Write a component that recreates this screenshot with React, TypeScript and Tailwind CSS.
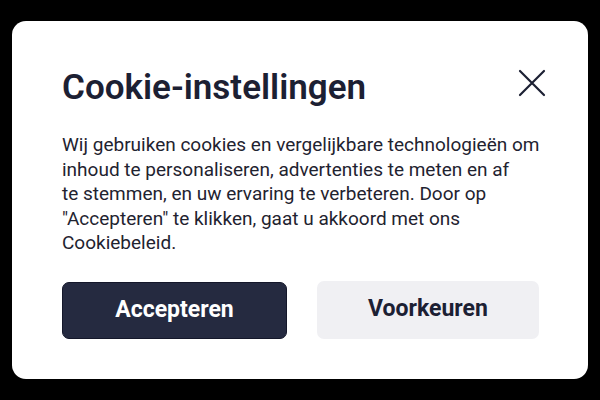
export default function App() {
    return (
        <div className="w-[600px] h-[400px] bg-black pt-[21px] px-[12px]" style={{ fontFamily: "Roboto, 'Liberation Sans', sans-serif" }}>
            <div className="h-[358px] bg-white rounded-[14px] pl-[50px] pr-[42px] pt-[47px]">
                <div className="flex items-start justify-between">
                    <h1 className="text-[35px] leading-[40px] font-semibold text-[#1c2033]">Cookie-instellingen</h1>
                    <button className="mt-[1px] text-[#1c2033]">
                        <svg width="28" height="28" viewBox="0 0 28 28" fill="none" stroke="currentColor" strokeWidth="2.2" strokeLinecap="round">
                            <path d="M2 2 L26 26 M26 2 L2 26" />
                        </svg>
                    </button>
                </div>

                <p className="mt-[25px] text-[19px] leading-[24.5px] text-[#1f2330] whitespace-nowrap">
                    Wij gebruiken cookies en vergelijkbare technologieën om<br />
                    inhoud te personaliseren, advertenties te meten en af<br />
                    te stemmen, en uw ervaring te verbeteren. Door op<br />
                    "Accepteren" te klikken, gaat u akkoord met ons<br />
                    Cookiebeleid.
                </p>

                <div className="flex items-start gap-[30px] mt-[25px]">
                    <button className="w-[225px] h-[57px] mt-[1px] rounded-[7px] bg-[#252a40] border border-[#14172a] text-white text-[23px] font-bold">
                        Accepteren
                    </button>
                    <button className="w-[222px] h-[58px] rounded-[7px] bg-[#f0f0f3] text-[#1c2033] text-[23px] font-bold">
                        Voorkeuren
                    </button>
                </div>
            </div>
        </div>
    );
}
